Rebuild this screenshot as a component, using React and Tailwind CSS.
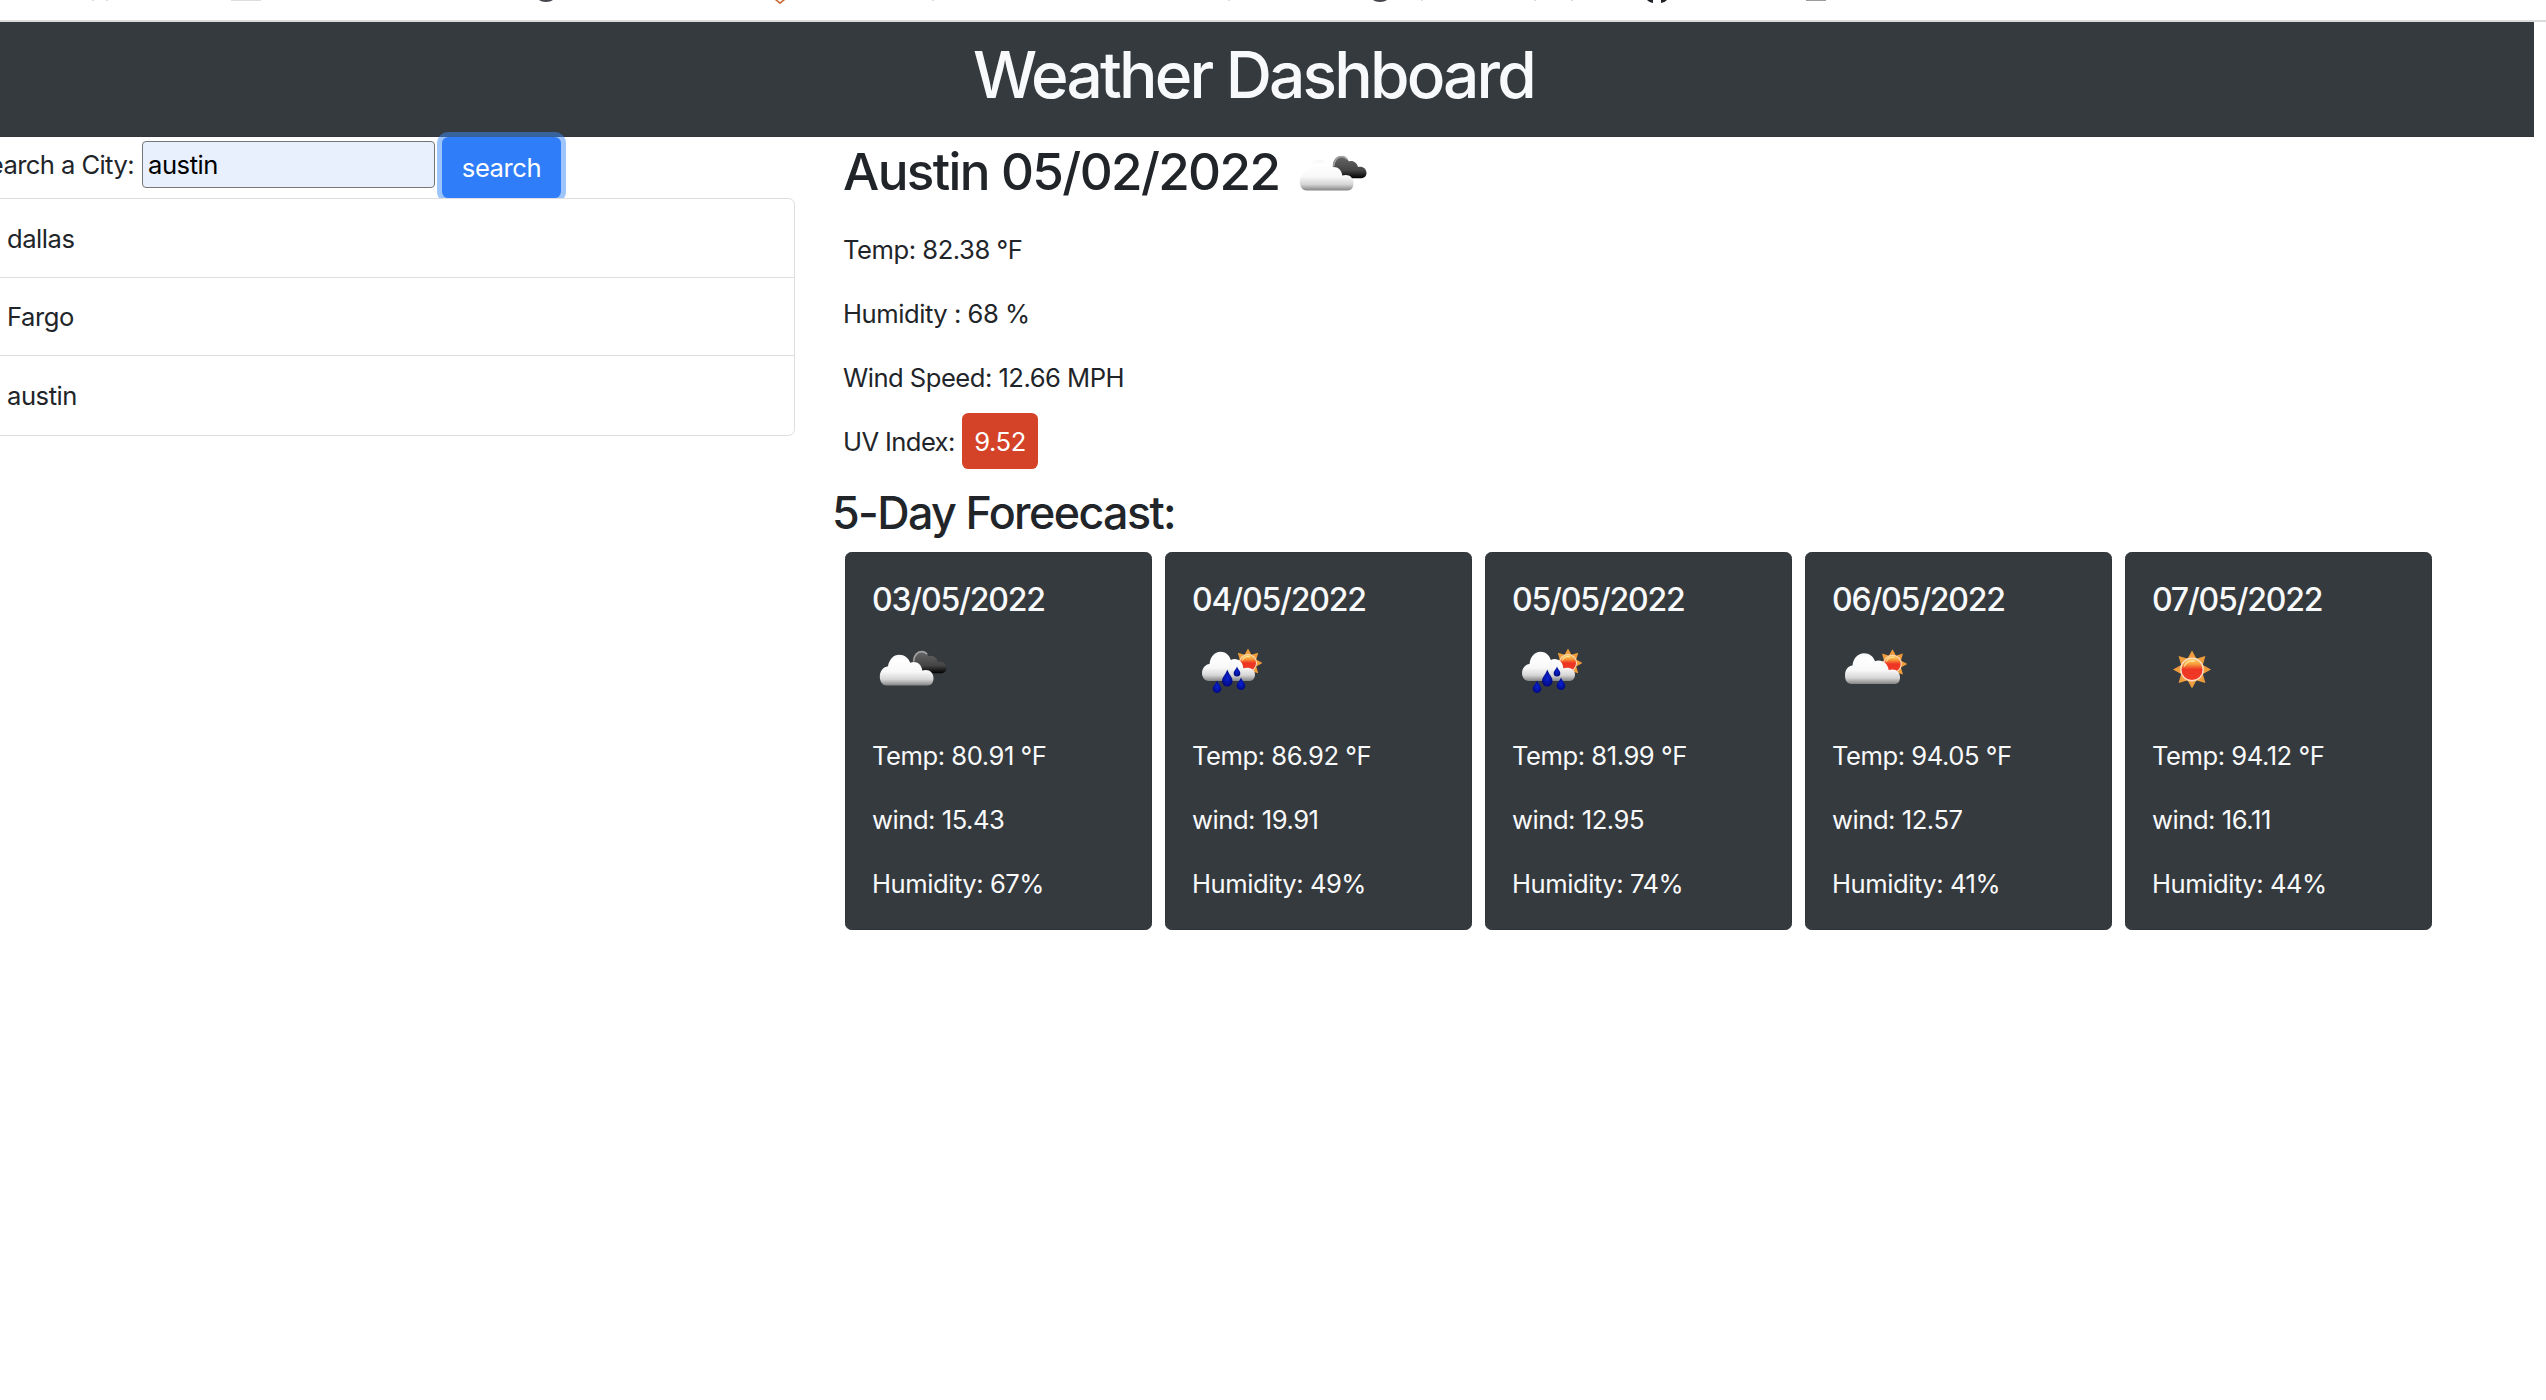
import React from "react";

const RAY_ANGLES = [0, 45, 90, 135, 180, 225, 270, 315];

function Gradients({ id }) {
  return (
    <defs>
      <linearGradient id={`${id}-cloud`} x1="0" y1="0" x2="0" y2="1">
        <stop offset="0" stopColor="#f6f6f6" />
        <stop offset="0.15" stopColor="#ffffff" />
        <stop offset="0.55" stopColor="#f8f8f8" />
        <stop offset="0.8" stopColor="#d6d6d6" />
        <stop offset="1" stopColor="#858585" />
      </linearGradient>
      <linearGradient id={`${id}-dark`} x1="0" y1="0" x2="0" y2="1">
        <stop offset="0" stopColor="#686868" />
        <stop offset="0.65" stopColor="#444444" />
        <stop offset="1" stopColor="#000000" />
      </linearGradient>
      <linearGradient id={`${id}-sun`} x1="0" y1="0" x2="0" y2="1">
        <stop offset="0" stopColor="#fbd46a" />
        <stop offset="0.25" stopColor="#f7a03c" />
        <stop offset="0.5" stopColor="#ee3524" />
        <stop offset="1" stopColor="#f03a26" />
      </linearGradient>
      <radialGradient id={`${id}-drop`}>
        <stop offset="0" stopColor="#0a22d8" />
        <stop offset="1" stopColor="#020a80" />
      </radialGradient>
    </defs>
  );
}

function Sun({ id, cx, cy, scale = 1 }) {
  return (
    <g transform={`translate(${cx} ${cy}) scale(${scale})`}>
      {RAY_ANGLES.map((a) => (
        <path
          key={a}
          d="M-5.2 -9.5L0 -19L5.2 -9.5Z"
          fill="#ee9c3c"
          transform={`rotate(${a})`}
        />
      ))}
      <circle r="11.2" fill={`url(#${id}-sun)`} stroke="#fbdcc0" strokeWidth="1.4" />
      <path d="M-7.5 -3.5A8.5 8.5 0 0 1 2 -8.3" fill="none" stroke="#fff0a8" strokeWidth="1.4" strokeLinecap="round" opacity="0.8" />
    </g>
  );
}

function Drop({ id, x, y, w, h }) {
  const r = w / 2;
  return (
    <path
      d={`M${x} ${y}C${x + r * 0.4} ${y + h * 0.35} ${x + r} ${y + h * 0.45} ${x + r} ${y + h - r}A${r} ${r} 0 0 1 ${x - r} ${y + h - r}C${x - r} ${y + h * 0.45} ${x - r * 0.4} ${y + h * 0.35} ${x} ${y}Z`}
      fill={`url(#${id}-drop)`}
    />
  );
}

function WeatherIcon({ kind, id }) {
  return (
    <svg viewBox="0 0 80 80" className="block h-20 w-20 shrink-0">
      <Gradients id={id} />
      {kind === "broken" && (
        <>
          <path
            d="M40 33C39 26 43 21 48 21C52 21 54.5 23.5 56 26.5C60 25 64 28 65 32C70 31 73.5 34 73.5 38C73.5 41.5 71 43.3 67 43.3H52Z"
            fill={`url(#${id}-dark)`}
          />
          <path d="M40.6 31.5C41 25.5 44.5 21.6 48.6 21.6C51 21.6 52.8 22.6 54 24.2" fill="none" stroke="#a2a2a2" strokeWidth="1.7" />
          <path
            d="M13.5 55.5C9 55.5 6.8 51 6.8 46.5C6.8 41 10.5 36.8 15 36.2C16 29.5 20.5 24.7 26.2 24.7C31.5 24.7 35.5 28 37.2 32.8C43 30.5 48.5 34 49.3 40.5C55.5 38.5 60.5 42 60.5 48C60.5 52.5 58.5 55.5 54.5 55.5Z"
            fill={`url(#${id}-cloud)`}
          />
        </>
      )}
      {kind === "rain" && (
        <>
          <Sun id={id} cx={55} cy={33} scale={0.76} />
          <path
            d="M15.5 51C11.5 51 9 47 9 43.3C9 38.5 12 34.5 16.5 34C17.3 27 21.5 21.8 27.5 21.8C32.5 21.8 36.3 25 37.8 30C43.5 27.3 50 31 50.3 38.3C56.5 36.5 62 39.5 62 44.5C62 48.5 59.5 51 56.5 51Z"
            fill={`url(#${id}-cloud)`}
          />
          <Drop id={id} x={44} y={36.5} w={6.6} h={10} />
          <Drop id={id} x={34.3} y={39.5} w={10.5} h={17} />
          <Drop id={id} x={24} y={50.5} w={8.6} h={12.4} />
          <Drop id={id} x={48} y={47.5} w={8.6} h={12.6} />
        </>
      )}
      {kind === "few" && (
        <>
          <Sun id={id} cx={59.5} cy={34} scale={0.78} />
          <path
            d="M18.5 54C14 54 12 50 12 45.5C12 40 15 36 19.5 35.6C20 28.5 25 23.3 31 23.3C36.5 23.3 40.3 26.5 42 31.3C48 29 54.5 32.5 55.7 40C62.5 38 67 41.5 67 47.5C67 51.5 65.3 54 61 54Z"
            fill={`url(#${id}-cloud)`}
          />
        </>
      )}
      {kind === "clear" && <Sun id={id} cx={39} cy={39.5} />}
    </svg>
  );
}

// Lower edges of the bookmark icons cut off by the top of the window.
function BookmarkStrip() {
  return (
    <div className="flex h-5 items-start bg-white">
      <svg className="ml-[92px] h-1 w-4" viewBox="0 0 16 4"><path d="M0 0H2V1H0ZM14 0H16V1H14Z" fill="#dcdcdc" /></svg>
      <svg className="ml-[123px] h-1 w-[30px]" viewBox="0 0 30 4"><rect width="30" height="1" fill="#dedede" /></svg>
      <svg className="ml-[278px] h-1 w-[14px]" viewBox="0 0 14 4"><path d="M0 0H14C11 2.6 3 2.6 0 0Z" fill="#47464e" /></svg>
      <svg className="ml-[221px] h-1.5 w-3" viewBox="0 0 12 6"><path d="M1 -1L6 3.2L11 -1" fill="none" stroke="#c9703a" strokeWidth="1.7" /></svg>
      <svg className="ml-[146px] h-1 w-0.5" viewBox="0 0 2 4"><rect width="2" height="1" fill="#dcdcdc" /></svg>
      <svg className="ml-[294px] h-1 w-0.5" viewBox="0 0 2 4"><rect width="2" height="1" fill="#dcdcdc" /></svg>
      <svg className="ml-[143px] h-1 w-[14px]" viewBox="0 0 14 4"><path d="M0 0H14C11 2.6 3 2.6 0 0Z" fill="#47464e" /></svg>
      <svg className="ml-[34px] h-1 w-0.5" viewBox="0 0 2 4"><rect width="2" height="1" fill="#dcdcdc" /></svg>
      <svg className="ml-[111px] h-1 w-0.5" viewBox="0 0 2 4"><rect width="2" height="1" fill="#dcdcdc" /></svg>
      <svg className="ml-[35px] h-1 w-0.5" viewBox="0 0 2 4"><rect width="2" height="1" fill="#dcdcdc" /></svg>
      <svg className="ml-[74px] h-[3px] w-5" viewBox="0 0 20 3"><path d="M0 0H6V3C3.5 2.6 1.5 1.6 0 0ZM14 0H20C18.5 1.6 16.5 2.6 14 3Z" fill="#1f2328" /></svg>
      <svg className="ml-[139px] h-1 w-5" viewBox="0 0 20 4"><rect width="20" height="1" fill="#9b9ba0" /></svg>
    </div>
  );
}

const history = ["dallas", "Fargo", "austin"];

const forecast = [
  { date: "03/05/2022", icon: "broken", temp: "80.91", wind: "15.43", humidity: 67 },
  { date: "04/05/2022", icon: "rain", temp: "86.92", wind: "19.91", humidity: 49 },
  { date: "05/05/2022", icon: "rain", temp: "81.99", wind: "12.95", humidity: 74 },
  { date: "06/05/2022", icon: "few", temp: "94.05", wind: "12.57", humidity: 41 },
  { date: "07/05/2022", icon: "clear", temp: "94.12", wind: "16.11", humidity: 44 },
];

function ForecastCard({ day, index }) {
  return (
    <article className="h-[378px] w-[307px] rounded-[6.4px] border border-[#303438] bg-[#353a3e] px-[26px] pt-[28px] text-[#f8f9fa]">
      <h5 className="text-[32px] font-[550] leading-[38.4px] tracking-[-0.037em]">{day.date}</h5>
      <div className="ml-px mt-[10.5px]">
        <WeatherIcon kind={day.icon} id={`day${index}`} />
      </div>
      <div className="mt-[27.5px] flex flex-col gap-[25.6px]">
        <p>Temp: {day.temp} °F</p>
        <p>wind: {day.wind}</p>
        <p>Humidity: {day.humidity}%</p>
      </div>
    </article>
  );
}

export default function App() {
  return (
    <div className="h-[1400px] w-[2546px] overflow-hidden bg-white font-['Inter',sans-serif] text-[25.6px] leading-[38.4px] tracking-[-0.018em] text-[#212529]">
      <BookmarkStrip />
      <div className="h-0.5 bg-[#dadada]" />

      <div className="-ml-[27px] w-[2561px]">
        <header className="h-[115px] border-b border-[#323439] bg-[#353a3e] pt-[14.6px] text-center">
          <h1 className="text-[64px] font-[550] leading-[76.8px] tracking-[-0.044em] text-[#f8f9fa]">
            Weather Dashboard
          </h1>
        </header>

        <div className="flex">
          <aside className="w-[822px]">
            <form className="flex h-[61px] items-start">
              <label className="mt-[9px] w-[169px] whitespace-nowrap tracking-[-0.023em]">Search a City:</label>
              <input
                readOnly
                value="austin"
                className="mt-1 h-[47px] w-[293px] rounded-[4px] border border-[#767676] bg-[#e8f0fe] px-[5px] text-black tracking-[-0.018em]"
              />
              <button
                type="button"
                className="ml-[7px] h-[61px] w-[119px] rounded-[6.4px] bg-[#2f7df8] pt-[1.5px] text-white shadow-[0_0_0_5px_rgba(60,140,250,0.5)]"
              >
                search
              </button>
            </form>
            <ul className="relative rounded-[6.4px] border border-[#dedede] bg-white">
              {history.map((city) => (
                <li
                  key={city}
                  className="h-[78.5px] border-b border-[#dedede] pl-[33px] pt-[20.8px] last:border-b-0"
                >
                  {city}
                </li>
              ))}
            </ul>
          </aside>

          <main className="pl-12">
            <section>
              <h2 className="-mt-0.5 flex h-20 items-center text-[51.2px] font-[550] tracking-[-0.032em]">
                <span className="w-[450px] whitespace-nowrap pb-[7px]">Austin 05/02/2022</span>
                <WeatherIcon kind="broken" id="today" />
              </h2>
              <div className="mt-[15.5px] flex flex-col gap-[25.6px]">
                <p>Temp: 82.38 °F</p>
                <p>Humidity : 68 %</p>
                <p className="tracking-[-0.02em]">Wind Speed: 12.66 MPH</p>
                <p className="flex h-[38.4px] items-center">
                  <span className="w-[119px] tracking-[-0.024em]">UV Index:</span>
                  <span className="-mt-px flex h-14 w-[76px] items-center justify-center rounded-[6.4px] bg-[#d44228] pt-px text-white">
                    9.52
                  </span>
                </p>
              </div>
            </section>

            <h3 className="-ml-[11px] mt-[26.5px] text-[44.8px] font-[550] leading-[53.8px] tracking-[-0.036em]">
              5-Day Foreecast:
            </h3>
            <div className="ml-[2px] mt-[10.5px] flex gap-[13px]">
              {forecast.map((day, i) => (
                <ForecastCard key={day.date} day={day} index={i} />
              ))}
            </div>
          </main>
        </div>
      </div>
    </div>
  );
}
